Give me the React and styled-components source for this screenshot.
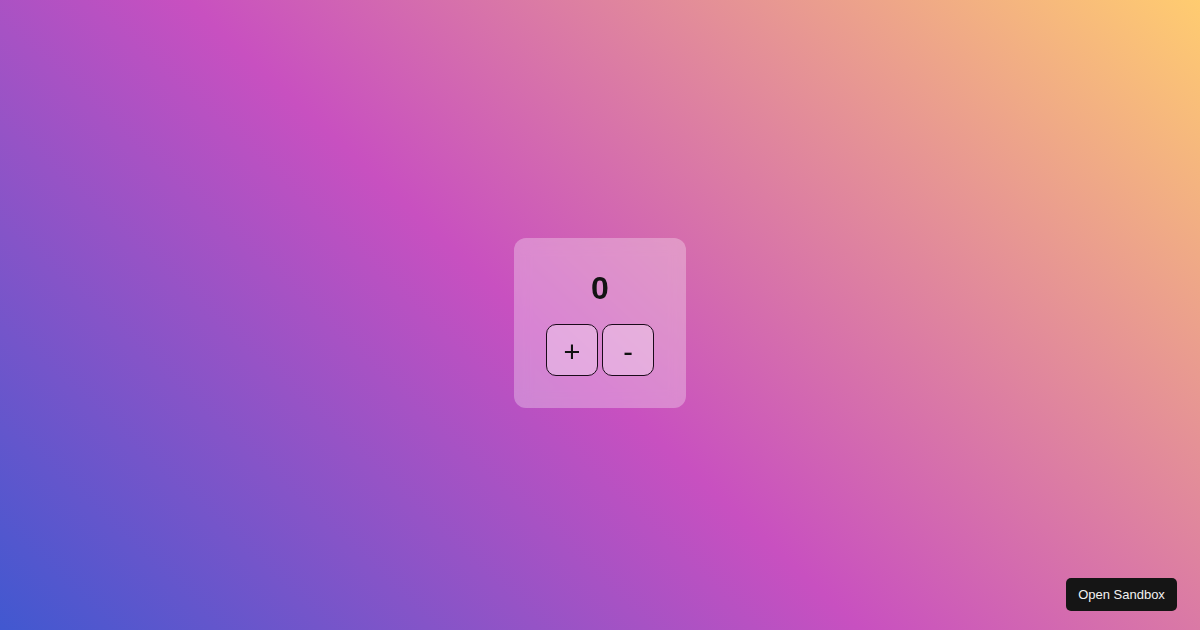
import React, { useState } from "react";
import styled, { createGlobalStyle } from "styled-components";

const Global = createGlobalStyle`
  html, body, #root { margin: 0; padding: 0; height: 100%; }
  body { font-family: "Liberation Sans", Arial, sans-serif; }
  * { box-sizing: border-box; }
`;

const Page = styled.main`
  width: 100%;
  height: 100vh;
  padding-top: 16px;
  display: flex;
  align-items: center;
  justify-content: center;
  background: linear-gradient(43deg, #4158d0 0%, #c850c0 46%, #ffcc70 100%);
`;

const Card = styled.section`
  width: 172px;
  height: 170px;
  padding: 32px;
  border-radius: 12px;
  background: rgba(255, 255, 255, 0.3);
  backdrop-filter: blur(8px);
  display: flex;
  flex-direction: column;
  align-items: center;
`;

const Count = styled.h1`
  margin: 0 0 17px;
  font-family: "Liberation Sans", Arial, sans-serif;
  font-size: 32px;
  line-height: 37px;
  font-weight: 700;
  color: #141414;
`;

const Row = styled.div`
  display: flex;
  gap: 4px;
`;

const Btn = styled.button`
  width: 52px;
  height: 52px;
  padding: 4px 0 0;
  display: flex;
  align-items: center;
  justify-content: center;
  border: 1px solid #1a0a1a;
  border-radius: 10px;
  background: rgba(255, 255, 255, 0.3);
  color: #111;
  font-family: "Liberation Sans", Arial, sans-serif;
  font-size: 29px;
  line-height: 1;
  cursor: pointer;
`;

const Sandbox = styled.a`
  position: fixed;
  right: 23px;
  bottom: 19px;
  width: 111px;
  height: 33px;
  display: flex;
  align-items: center;
  justify-content: center;
  background: #151515;
  color: #f2f2f2;
  border-radius: 5px;
  font-family: "Liberation Sans", Arial, sans-serif;
  font-size: 13px;
  text-decoration: none;
`;

export default function App() {
  const [count, setCount] = useState(0);
  return (
    <>
      <Global />
      <Page>
        <Card>
          <Count>{count}</Count>
          <Row>
            <Btn onClick={() => setCount((c) => c + 1)}>+</Btn>
            <Btn onClick={() => setCount((c) => c - 1)}>-</Btn>
          </Row>
        </Card>
      </Page>
      <Sandbox href="#">Open Sandbox</Sandbox>
    </>
  );
}
